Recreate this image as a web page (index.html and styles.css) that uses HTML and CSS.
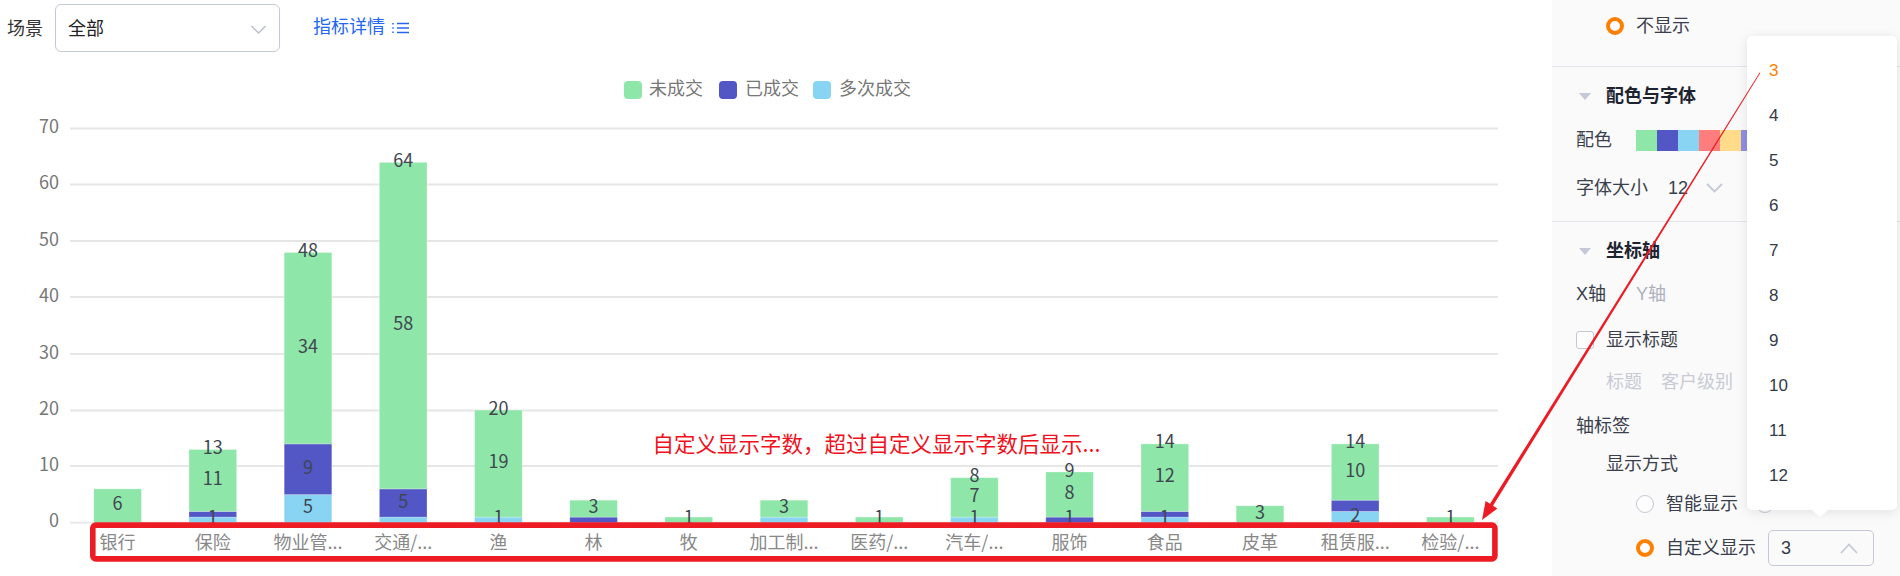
FILE: index.html
```html
<!DOCTYPE html>
<html lang="zh">
<head>
<meta charset="utf-8">
<title>图表配置</title>
<link rel="stylesheet" href="styles.css">
</head>
<body>
<main class="main">
  <div class="toolbar">
    <span class="tb-label">场景</span>
    <div class="select">
      <span>全部</span>
      <svg class="sel-chev" viewBox="0 0 16 9"><path d="M1 1l7 7 7-7"/></svg>
    </div>
    <a class="detail">指标详情</a>
    <svg class="list-ic" viewBox="0 0 17 12"><path d="M1 1v1.600M1 5.200v1.600M1 9.400V11M5 1.600h12M5 6h12M5 10.400h12"/></svg>
  </div>
  <svg class="chart" viewBox="0 56 1552 520">
    <g class="legend">
      <rect class="g" x="624" y="81" width="18" height="18" rx="4"/><text x="649" y="95">未成交</text>
      <rect class="p" x="719" y="81" width="18" height="18" rx="4"/><text x="745" y="95">已成交</text>
      <rect class="b" x="813" y="81" width="18" height="18" rx="4"/><text x="839" y="95">多次成交</text>
    </g>
    <g class="grid">
      <path d="M70 128.5H1498M70 184.5H1498M70 241H1498M70 297H1498M70 354H1498M70 410.5H1498M70 466H1498M70 522.7H1498"/>
    </g>
    <g class="yaxis">
      <text x="59" y="133">70</text><text x="59" y="189">60</text><text x="59" y="245.5">50</text><text x="59" y="301.5">40</text><text x="59" y="358.5">30</text><text x="59" y="415">20</text><text x="59" y="470.5">10</text><text x="59" y="527">0</text>
    </g>
    <g class="bars">
      <rect class="g" x="93.8" y="488.9" width="47.6" height="33.8"/>
      <rect class="b" x="189" y="517.1" width="47.6" height="5.6"/><rect class="p" x="189" y="511.4" width="47.6" height="5.7"/><rect class="g" x="189" y="449.5" width="47.6" height="61.9"/>
      <rect class="b" x="284.2" y="494.6" width="47.6" height="28.1"/><rect class="p" x="284.2" y="443.9" width="47.6" height="50.7"/><rect class="g" x="284.2" y="252.5" width="47.6" height="191.4"/>
      <rect class="b" x="379.4" y="517.1" width="47.6" height="5.6"/><rect class="p" x="379.4" y="488.9" width="47.6" height="28.2"/><rect class="g" x="379.4" y="162.4" width="47.6" height="326.5"/>
      <rect class="b" x="474.6" y="517.1" width="47.6" height="5.6"/><rect class="g" x="474.6" y="410.1" width="47.6" height="107"/>
      <rect class="p" x="569.8" y="517.1" width="47.6" height="5.6"/><rect class="g" x="569.8" y="500.2" width="47.6" height="16.9"/>
      <rect class="g" x="665" y="517.1" width="47.6" height="5.6"/>
      <rect class="b" x="760.2" y="517.1" width="47.6" height="5.6"/><rect class="g" x="760.2" y="500.2" width="47.6" height="16.9"/>
      <rect class="g" x="855.4" y="517.1" width="47.6" height="5.6"/>
      <rect class="b" x="950.6" y="517.1" width="47.6" height="5.6"/><rect class="g" x="950.6" y="477.7" width="47.6" height="39.4"/>
      <rect class="p" x="1045.8" y="517.1" width="47.6" height="5.6"/><rect class="g" x="1045.8" y="472" width="47.6" height="45.1"/>
      <rect class="b" x="1141" y="517.1" width="47.6" height="5.6"/><rect class="p" x="1141" y="511.4" width="47.6" height="5.7"/><rect class="g" x="1141" y="443.9" width="47.6" height="67.5"/>
      <rect class="g" x="1236.2" y="505.8" width="47.6" height="16.9"/>
      <rect class="b" x="1331.4" y="511.4" width="47.6" height="11.3"/><rect class="p" x="1331.4" y="500.2" width="47.6" height="11.2"/><rect class="g" x="1331.4" y="443.9" width="47.6" height="56.3"/>
      <rect class="g" x="1426.6" y="517.1" width="47.6" height="5.6"/>
    </g>
    <g class="vals">
      <text x="117.6" y="510.3">6</text>
      <text x="212.8" y="524.4">1</text><text x="212.8" y="485">11</text><text x="212.8" y="454">13</text>
      <text x="308" y="513.1">5</text><text x="308" y="473.7">9</text><text x="308" y="352.7">34</text><text x="308" y="257">48</text>
      <text x="403.2" y="507.5">5</text><text x="403.2" y="330.2">58</text><text x="403.2" y="166.9">64</text>
      <text x="498.4" y="524.4">1</text><text x="498.4" y="468.1">19</text><text x="498.4" y="414.6">20</text>
      <text x="593.6" y="513.1">3</text>
      <text x="688.8" y="524.4">1</text>
      <text x="784" y="513.1">3</text>
      <text x="879.2" y="524.4">1</text>
      <text x="974.4" y="524.4">1</text><text x="974.4" y="501.9">7</text><text x="974.4" y="482.2">8</text>
      <text x="1069.6" y="524.4">1</text><text x="1069.6" y="499">8</text><text x="1069.6" y="476.5">9</text>
      <text x="1164.8" y="524.4">1</text><text x="1164.8" y="482.2">12</text><text x="1164.8" y="448.4">14</text>
      <text x="1260" y="518.8">3</text>
      <text x="1355.2" y="521.6">2</text><text x="1355.2" y="476.5">10</text><text x="1355.2" y="448.4">14</text>
      <text x="1450.4" y="524.4">1</text>
    </g>
    <g class="xaxis">
      <text x="117.6" y="549">银行</text><text x="212.8" y="549">保险</text><text x="308" y="549">物业管...</text><text x="403.2" y="549">交通/...</text><text x="498.4" y="549">渔</text><text x="593.6" y="549">林</text><text x="688.8" y="549">牧</text><text x="784" y="549">加工制...</text><text x="879.2" y="549">医药/...</text><text x="974.4" y="549">汽车/...</text><text x="1069.6" y="549">服饰</text><text x="1164.8" y="549">食品</text><text x="1260" y="549">皮革</text><text x="1355.2" y="549">租赁服...</text><text x="1450.4" y="549">检验/...</text>
    </g>
    <rect class="frame" x="92.8" y="525.1" width="1402.1" height="33.8" rx="3"/>
    <text class="note" x="652.500" y="452">自定义显示字数，超过自定义显示字数后显示...</text>
  </svg>
</main>

<aside class="panel">
  <section class="sec sec-top">
    <div class="row in1"><span class="radio on"></span><span class="gap12">不显示</span></div>
  </section>
  <section class="sec sec-color">
    <div class="row title"><i class="tri"></i>配色与字体</div>
    <div class="row mt12">
      <span class="lab60">配色</span>
      <div class="swatches"><i class="s1"></i><i class="s2"></i><i class="s3"></i><i class="s4"></i><i class="s5"></i><i class="s6"></i></div>
    </div>
    <div class="row mt16">
      <span class="lab92">字体大小</span><span>12</span>
      <svg class="chev-sm" viewBox="0 0 17 10"><path d="M1 1l7.500 7.500L16 1"/></svg>
    </div>
  </section>
  <section class="sec sec-axis">
    <div class="row title"><i class="tri"></i>坐标轴</div>
    <div class="row mt11"><span class="lab60">X轴</span><span class="muted">Y轴</span></div>
    <div class="row mt14"><span class="check"></span>显示标题</div>
    <div class="row mt10 in1 faint"><span class="lab55">标题</span><span>客户级别</span></div>
    <div class="row mt12">轴标签</div>
    <div class="row mt6 in1">显示方式</div>
    <div class="row mt8 in2"><span class="radio"></span><span class="gap12">智能显示</span><span class="radio r2"></span></div>
    <div class="row mt12 in2"><span class="radio on"></span><span class="gap12">自定义显示</span>
      <div class="numsel"><span>3</span><svg viewBox="0 0 18 11"><path d="M1 10l8-8.500 8 8.500"/></svg></div>
    </div>
  </section>
</aside>

<ul class="pop">
  <li class="cur">3</li><li>4</li><li>5</li><li>6</li><li>7</li><li>8</li><li>9</li><li>10</li><li>11</li><li>12</li>
</ul>

<svg class="arrow" viewBox="0 0 1900 576"><polygon points="1760.34,72.9 1493,505.7 1497.4,508.4 1482,520 1485.6,501 1490,503.75 1759.66,72.5"/></svg>
</body>
</html>
```
FILE: styles.css
```css
*{box-sizing:border-box}
html,body{margin:0;height:576px;overflow:hidden;background:#fff}
body{position:relative;display:flex;width:1900px;font:18px/32px "Liberation Sans","Noto Sans CJK SC",sans-serif;color:#3a3f4b}
.main{width:1552px;flex:none}
.toolbar{height:56px;display:flex;align-items:flex-start;padding:4px 0 0 7px}
.tb-label{line-height:50px;color:#333;margin-right:12px}
.select{width:225px;height:48px;border:1px solid #c5c8d6;border-radius:6px;display:flex;align-items:center;justify-content:space-between;padding:2px 12px 0 12px;color:#222}
.sel-chev{width:17px;height:9px;fill:none;stroke:#bcc0d0;stroke-width:1.500}
.detail{margin-left:33px;line-height:46px;color:#2468f2}
.list-ic{width:17px;height:12px;margin:18px 0 0 7px;fill:none;stroke:#2468f2;stroke-width:1.500}
.chart{display:block;width:1552px;height:520px}
.chart text{font-family:"Noto Sans CJK SC","Liberation Sans",sans-serif;font-size:18px}
.g{fill:#8ee6a8}.p{fill:#5356c5}.b{fill:#88d4f2}
.legend text{fill:#777}
.grid path{fill:none;stroke:#e6e6e6;stroke-width:1.800}
.yaxis text{fill:#777;text-anchor:end}
.bars rect{stroke:#fff;stroke-opacity:.25;stroke-width:1}
.vals text{fill:#3f4650;text-anchor:middle}
.xaxis text{fill:#888;text-anchor:middle}
.frame{fill:none;stroke:#ed1c24;stroke-width:5.600}
.chart .note{fill:#f01020;font-size:21.500px}
.panel{width:348px;flex:none;background:#fafafb;padding-left:24px}
.sec{margin-left:-24px;padding-left:24px;border-bottom:1px solid #e4e4ee}
.sec-top{height:67px;padding-top:10px}
.sec-color{height:155px;padding-top:13px}
.sec-axis{padding-top:13px;border-bottom:0}
.row{display:flex;align-items:center;height:32px;white-space:nowrap}
.title{font-weight:700;color:#1e2330}
.tri{width:0;height:0;border:6px solid transparent;border-top:7px solid #c5c8d6;border-bottom:0;margin:0 15px 0 3px}
.in1{padding-left:30px}.in2{padding-left:60px}
.mt6{margin-top:6px}.mt8{margin-top:8px}.mt10{margin-top:10px}.mt11{margin-top:11px}.mt12{margin-top:12px}.mt14{margin-top:14px}.mt16{margin-top:16px}
.radio{width:18px;height:18px;border-radius:50%;border:1px solid #c5c8d6;background:#fff;flex:none}
.radio.on{border:4px solid #ff8000}
.r2{margin-left:18px}
.gap12{margin-left:12px}
.lab60{width:60px}.lab92{width:92px}.lab55{width:55px}
.muted{color:#aeb1bd}
.faint{color:#c8cad4}
.swatches{display:flex}
.swatches i{width:21px;height:21px}
.s1{background:#8ee6a8}.s2{background:#5356c5}.s3{background:#88d4f2}.s4{background:#ff7d7d}.s5{background:#ffdb8a}.s6{background:#8e8ee6}
.chev-sm{width:17px;height:10px;margin-left:18px;fill:none;stroke:#c5c8d6;stroke-width:1.800}
.check{width:18px;height:18px;border:1px solid #c5c8d6;border-radius:3px;background:#fff;margin-right:12px}
.numsel{width:106px;height:36px;margin-left:12px;border:1px solid #c5c8d6;border-radius:5px;display:flex;align-items:center;justify-content:space-between;padding:0 15px 0 12px;color:#333a4a}
.numsel svg{width:18px;height:11px;fill:none;stroke:#c5c8d6;stroke-width:1.800}
.pop{position:absolute;left:1747px;top:36px;width:150px;height:474px;margin:0;padding:12px 0 0 22px;list-style:none;background:#fff;border-radius:5px;box-shadow:0 2px 12px rgba(0,0,0,.1);font-size:17px;line-height:45px;color:#333a4a}
.pop::after{content:"";position:absolute;left:65px;bottom:-7px;border:8px solid transparent;border-top:7px solid #fff;border-bottom:0}
.cur{color:#ff8000}
.arrow{position:absolute;left:0;top:0;width:1900px;height:576px;pointer-events:none}
.arrow polygon{fill:#ed1c24}
```
